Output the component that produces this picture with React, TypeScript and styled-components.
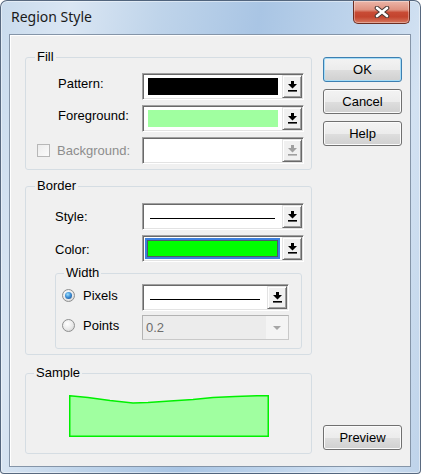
import React from "react";
import styled, { createGlobalStyle } from "styled-components";

const GlobalStyle = createGlobalStyle`
  html, body {
    margin: 0;
    padding: 0;
  }
  body {
    width: 421px;
    height: 474px;
    overflow: hidden;
    background: #ffffff;
    font-family: "Liberation Sans", Arial, sans-serif;
    font-size: 13px;
  }
  * {
    box-sizing: border-box;
  }
`;

const Window = styled.div`
  width: 421px;
  height: 474px;
  display: flex;
  flex-direction: column;
  border: 1px solid rgba(48, 66, 90, 0.75);
  border-radius: 7px 7px 4px 4px;
  overflow: hidden;
  background: linear-gradient(
    100deg,
    #c9dbed 0%,
    #dae6f3 14%,
    #bfd4ea 32%,
    #a9c5e4 52%,
    #bdd3eb 70%,
    #d3e2f2 86%,
    #bed3ea 100%
  );
  box-shadow: inset 0 0 0 1px rgba(255, 255, 255, 0.45);
`;

const TitleBar = styled.div`
  height: 33px;
  display: flex;
  align-items: flex-start;
  flex-shrink: 0;
`;

const Title = styled.div`
  margin: 6px 0 0 10px;
  font-family: "Noto Sans", "Open Sans", sans-serif;
  font-size: 14px;
  line-height: 20px;
  color: #1a1a1a;
`;

const CloseButton = styled.div`
  width: 57px;
  height: 23px;
  margin-left: auto;
  margin-right: 10px;
  display: flex;
  align-items: center;
  justify-content: center;
  border: 1px solid #6c2e22;
  border-top: none;
  border-radius: 0 0 5px 5px;
  background: linear-gradient(
    #ebb6a9 0%,
    #df917f 40%,
    #c84b35 52%,
    #c3442e 72%,
    #d6785f 100%
  );
  box-shadow: inset 0 0 0 1px rgba(255, 255, 255, 0.35);
`;

const Client = styled.div`
  flex: 1;
  margin: 0 9px 6px 8px;
  display: flex;
  gap: 11px;
  padding: 15px 8px 12px 15px;
  background: #f0f0f0;
  border: 1px solid #8595a8;
  box-shadow: inset 1px 1px 0 #ffffff;
`;

const LeftColumn = styled.div`
  width: 287px;
  display: flex;
  flex-direction: column;
`;

const RightColumn = styled.div`
  width: 79px;
  display: flex;
  flex-direction: column;
  gap: 7px;
  padding-top: 7px;
`;

const Group = styled.fieldset<{
  $pt: number;
  $pb: number;
  $gap?: number;
  $mt?: number;
  $ml?: number;
  $mr?: number;
  $mb?: number;
}>`
  margin: ${(p) => p.$mt ?? 0}px ${(p) => p.$mr ?? 0}px ${(p) => p.$mb ?? 0}px
    ${(p) => p.$ml ?? 0}px;
  padding: ${(p) => p.$pt}px 0 ${(p) => p.$pb}px 0;
  min-width: 0;
  border: 1px solid #d5dde3;
  border-radius: 3px;
  display: flex;
  flex-direction: column;
  gap: ${(p) => p.$gap ?? 5}px;
`;

const Legend = styled.legend<{ $ml?: number }>`
  margin-left: ${(p) => p.$ml ?? 9}px;
  padding: 0 2px;
  font-size: 13px;
  line-height: 14px;
  color: #000;
`;

const Row = styled.div<{ $indent: number; $right: number; $h?: number }>`
  display: flex;
  align-items: center;
  height: ${(p) => p.$h ?? 27}px;
  padding: 0 ${(p) => p.$right}px 0 ${(p) => p.$indent}px;
`;

const FieldLabel = styled.label<{ $disabled?: boolean; $lift?: number }>`
  flex: 1;
  display: flex;
  align-items: center;
  gap: 7px;
  margin-bottom: ${(p) => (p.$lift ?? 0) * 2}px;
  font-size: 13px;
  line-height: 15px;
  color: ${(p) => (p.$disabled ? "#8d8d8d" : "#000")};
`;

const RadioText = styled.span`
  margin-left: 1px;
`;

const Checkbox = styled.span`
  width: 13px;
  height: 13px;
  flex-shrink: 0;
  border: 1px solid #b7b7b7;
  background: linear-gradient(135deg, #ececec, #fbfbfb);
`;

const Radio = styled.span<{ $checked?: boolean }>`
  width: 13px;
  height: 13px;
  flex-shrink: 0;
  border-radius: 50%;
  border: 1px solid #8e8f8f;
  background: radial-gradient(
    circle at 40% 35%,
    #ffffff 0%,
    #e9e9e9 55%,
    #c9c9c9 100%
  );
  display: flex;
  align-items: center;
  justify-content: center;

  &::after {
    content: "";
    width: 7px;
    height: 7px;
    border-radius: 50%;
    display: ${(p) => (p.$checked ? "block" : "none")};
    background: radial-gradient(
      circle at 40% 35%,
      #9fe1fb 0%,
      #3f8fd6 45%,
      #15447f 100%
    );
  }
`;

const Combo = styled.div<{ $w: number; $h?: number }>`
  width: ${(p) => p.$w}px;
  height: ${(p) => p.$h ?? 27}px;
  flex-shrink: 0;
  display: flex;
  padding: 1px;
  background: #ffffff;
  border-style: solid;
  border-width: 1px;
  border-color: #a0a0a0 #ffffff #ffffff #a0a0a0;
  box-shadow: inset 1px 1px 0 #696969, inset -1px -1px 0 #e3e3e3;
`;

const ComboValue = styled.div<{ $pad?: string }>`
  flex: 1;
  display: flex;
  align-items: center;
  padding: ${(p) => p.$pad ?? "0 4px"};
`;

const Swatch = styled.div<{ $color: string; $focused?: boolean }>`
  flex: 1;
  height: ${(p) => (p.$focused ? 21 : 17)}px;
  background: ${(p) => p.$color};
  border: ${(p) => (p.$focused ? "2px solid #3d7fdc" : "none")};
  box-shadow: ${(p) => (p.$focused ? "inset 0 0 0 1px #4e5a66" : "none")};
`;

const LineSample = styled.div`
  flex: 1;
  height: 1px;
  margin-top: 4px;
  background: #000;
`;

const DropButton = styled.div`
  width: 20px;
  flex-shrink: 0;
  display: flex;
  align-items: center;
  justify-content: center;
  background: #f0f0f0;
  border-style: solid;
  border-width: 1px;
  border-color: #e3e3e3 #696969 #696969 #e3e3e3;
  box-shadow: inset 1px 1px 0 #ffffff, inset -1px -1px 0 #a0a0a0;
`;

const DisabledCombo = styled.div<{ $w: number }>`
  width: ${(p) => p.$w}px;
  height: 25px;
  flex-shrink: 0;
  display: flex;
  align-items: center;
  background: #f4f4f4;
  border: 1px solid #c9c9c9;
  border-top-color: #b3b3b3;
  border-left-color: #b3b3b3;
`;

const DisabledText = styled.div`
  flex: 1;
  height: 100%;
  display: flex;
  align-items: center;
  padding-left: 3px;
  background: #ececec;
  color: #6d6d6d;
  font-size: 13px;
`;

const DisabledArrow = styled.div`
  width: 22px;
  display: flex;
  justify-content: center;

  &::after {
    content: "";
    border-left: 4px solid transparent;
    border-right: 4px solid transparent;
    border-top: 4px solid #a6a6a6;
  }
`;

const SampleArea = styled.div`
  padding-left: 43px;
  height: 42px;
`;

const Button = styled.button<{ $primary?: boolean }>`
  width: 79px;
  height: 25px;
  padding: 0;
  flex-shrink: 0;
  font-family: "Liberation Sans", Arial, sans-serif;
  font-size: 13px;
  color: #000;
  border: 1px solid ${(p) => (p.$primary ? "#3c7fb1" : "#707070")};
  border-radius: 3px;
  background: linear-gradient(
    #f3f3f3 0%,
    #ececec 50%,
    #dedede 51%,
    #d0d0d0 100%
  );
  box-shadow: inset 0 0 0 1px ${(p) => (p.$primary ? "#a6dcf6" : "#fbfbfb")};
`;

const PreviewButton = styled(Button)`
  margin-top: auto;
  margin-bottom: 4px;
`;

const DropGlyph = ({ disabled }: { disabled?: boolean }) => (
  <svg width="9" height="11" viewBox="0 0 9 11">
    <g fill={disabled ? "#a0a0a0" : "#000"}>
      <path d="M3 0h3v3h3L4.5 7.5 0 3h3z" />
      <rect x="0" y="9" width="9" height="1.6" />
    </g>
  </svg>
);

const CloseGlyph = () => (
  <svg width="16" height="12" viewBox="0 0 16 12">
    <path
      d="M3 2l10 8M13 2L3 10"
      stroke="#4a3a36"
      strokeWidth="4.6"
      strokeLinecap="round"
    />
    <path
      d="M3 2l10 8M13 2L3 10"
      stroke="#ffffff"
      strokeWidth="2.6"
      strokeLinecap="round"
    />
  </svg>
);

const ColorCombo = ({ color, focused, disabled }: { color: string; focused?: boolean; disabled?: boolean }) => (
  <Combo $w={162}>
    <ComboValue $pad={focused ? "0 2px 0 1px" : "0 4px"}>
      <Swatch $color={color} $focused={focused} />
    </ComboValue>
    <DropButton>
      <DropGlyph disabled={disabled} />
    </DropButton>
  </Combo>
);

const LineCombo = ({ width }: { width: number }) => (
  <Combo $w={width}>
    <ComboValue $pad="0 7px 0 6px">
      <LineSample />
    </ComboValue>
    <DropButton>
      <DropGlyph />
    </DropButton>
  </Combo>
);

export default function App() {
  return (
    <>
      <GlobalStyle />
      <Window>
        <TitleBar>
          <Title>Region Style</Title>
          <CloseButton>
            <CloseGlyph />
          </CloseButton>
        </TitleBar>
        <Client>
          <LeftColumn>
            <Group $pt={9} $pb={5}>
              <Legend>Fill</Legend>
              <Row $indent={32} $right={7}>
                <FieldLabel $lift={3}>Pattern:</FieldLabel>
                <ColorCombo color="#000000" />
              </Row>
              <Row $indent={32} $right={7}>
                <FieldLabel $lift={3}>Foreground:</FieldLabel>
                <ColorCombo color="#a0ffa0" />
              </Row>
              <Row $indent={11} $right={7}>
                <FieldLabel $disabled>
                  <Checkbox />
                  Background:
                </FieldLabel>
                <ColorCombo color="#ffffff" disabled />
              </Row>
            </Group>

            <Group $pt={10} $pb={5} $mt={9}>
              <Legend>Border</Legend>
              <Row $indent={29} $right={7}>
                <FieldLabel>Style:</FieldLabel>
                <LineCombo width={162} />
              </Row>
              <Row $indent={29} $right={7}>
                <FieldLabel $lift={-1}>Color:</FieldLabel>
                <ColorCombo color="#00ff00" focused />
              </Row>
              <Group $pt={4} $pb={8} $gap={4} $ml={29} $mr={9} $mt={-1}>
                <Legend $ml={8}>Width</Legend>
                <Row $indent={6} $right={12}>
                  <FieldLabel $lift={2}>
                    <Radio $checked />
                    <RadioText>Pixels</RadioText>
                  </FieldLabel>
                  <LineCombo width={147} />
                </Row>
                <Row $indent={6} $right={12} $h={25}>
                  <FieldLabel $lift={2}>
                    <Radio />
                    <RadioText>Points</RadioText>
                  </FieldLabel>
                  <DisabledCombo $w={147}>
                    <DisabledText>0.2</DisabledText>
                    <DisabledArrow />
                  </DisabledCombo>
                </Row>
              </Group>
            </Group>

            <Group $pt={15} $pb={16} $mt={11}>
              <Legend $ml={8}>Sample</Legend>
              <SampleArea>
                <svg width="201" height="42" viewBox="0 0 201 42">
                  <polygon
                    points="0.75,0.75 19,2.5 41,5.5 64,8 79,7.5 101,6 124,4.5 144,2.5 166,1.5 188,0.75 199.25,0.75 199.25,41.25 0.75,41.25"
                    fill="#a0ffa0"
                    stroke="#00f000"
                    strokeWidth="1.5"
                  />
                </svg>
              </SampleArea>
            </Group>
          </LeftColumn>

          <RightColumn>
            <Button $primary>OK</Button>
            <Button>Cancel</Button>
            <Button>Help</Button>
            <PreviewButton>Preview</PreviewButton>
          </RightColumn>
        </Client>
      </Window>
    </>
  );
}
